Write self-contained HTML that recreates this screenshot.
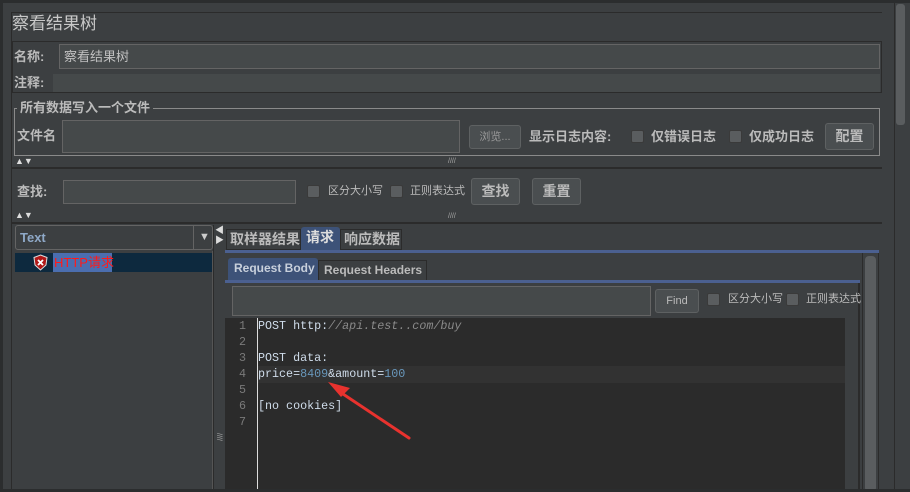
<!DOCTYPE html>
<html><head><meta charset="utf-8"><style>
*{margin:0;padding:0;box-sizing:border-box}
body{width:910px;height:492px;background:#3c3f41;position:relative;overflow:hidden;font-family:"Liberation Sans","Noto Sans CJK SC",sans-serif;color:#bbbbbb;font-size:13px}
.a{position:absolute}
.t{position:absolute;white-space:nowrap;line-height:1}
.inp{position:absolute;background:#45494a;border:1px solid #646464}
.btn{position:absolute;background:#4a4e50;border:1px solid #5e6162;border-radius:3px;color:#bbb;text-align:center;font-weight:bold}
.cb{position:absolute;width:13px;height:13px;background:#5a5d5f;border:1px solid #3a3a3a;border-radius:2px}
.sm{font-size:11px}
.code{position:absolute;font-family:"Liberation Mono",monospace;font-size:11.7px;color:#cfdcea;white-space:pre;line-height:16px}
.ln{position:absolute;font-family:"Liberation Mono",monospace;font-size:11.7px;color:#7a7a7a;line-height:16px;text-align:right;width:14px}
</style></head><body>
<div class="a" style="left:0;top:0;width:910px;height:3px;background:#2b2d2e"></div>
<div class="a" style="left:0;top:0;width:3px;height:492px;background:#2b2d2e"></div>
<div class="a" style="left:11px;top:12px;width:871px;height:1px;background:#2b2b2b"></div>
<div class="a" style="left:11px;top:12px;width:1px;height:480px;background:#2b2b2b"></div>
<div class="t" style="left:12px;top:15px;font-size:17px;color:#c8c8c8">察看结果树</div>
<div class="a" style="left:12px;top:41px;width:870px;height:52px;border:1px solid #2b2b2b"></div>
<div class="t" style="left:14px;top:50px;font-weight:bold">名称:</div>
<div class="inp" style="left:59px;top:44px;width:821px;height:25px"></div>
<div class="t" style="left:64px;top:50px;color:#c0c0c0">察看结果树</div>
<div class="t" style="left:14px;top:76px;font-weight:bold">注释:</div>
<div class="a" style="left:53px;top:74px;width:827px;height:18px;background:#45494a"></div>
<div class="a" style="left:14px;top:108px;width:866px;height:48px;border:1px solid #8a8a8a"></div>
<div class="t" style="left:17px;top:101px;background:#3c3f41;padding:0 3px;font-weight:bold">所有数据写入一个文件</div>
<div class="t" style="left:17px;top:129px;font-weight:bold">文件名</div>
<div class="inp" style="left:62px;top:120px;width:398px;height:33px"></div>
<div class="btn sm" style="left:469px;top:125px;width:52px;height:24px;line-height:22px;font-weight:normal;color:#999">浏览...</div>
<div class="t" style="left:529px;top:130px;font-weight:bold">显示日志内容:</div>
<div class="cb" style="left:631px;top:130px"></div>
<div class="t" style="left:651px;top:130px;font-weight:bold">仅错误日志</div>
<div class="cb" style="left:729px;top:130px"></div>
<div class="t" style="left:749px;top:130px;font-weight:bold">仅成功日志</div>
<div class="btn" style="left:825px;top:123px;width:49px;height:27px;line-height:25px;font-size:14px">配置</div>
<div class="t" style="left:15px;top:157px;font-size:9px;color:#ddd">▲▼</div>
<div class="t" style="left:448px;top:158px;font-size:7px;color:#aaa">////</div>
<div class="a" style="left:11px;top:167px;width:871px;height:2px;background:#2b2b2b"></div>
<div class="t" style="left:17px;top:185px;font-weight:bold">查找:</div>
<div class="inp" style="left:63px;top:180px;width:233px;height:24px"></div>
<div class="cb" style="left:307px;top:185px"></div>
<div class="t sm" style="left:328px;top:186px">区分大小写</div>
<div class="cb" style="left:390px;top:185px"></div>
<div class="t sm" style="left:410px;top:186px">正则表达式</div>
<div class="btn" style="left:471px;top:178px;width:49px;height:27px;line-height:25px;font-size:14px">查找</div>
<div class="btn" style="left:532px;top:178px;width:49px;height:27px;line-height:25px;font-size:14px">重置</div>
<div class="t" style="left:15px;top:211px;font-size:9px;color:#ddd">▲▼</div>
<div class="t" style="left:448px;top:213px;font-size:7px;color:#aaa">////</div>
<div class="a" style="left:11px;top:222px;width:871px;height:2px;background:#2b2b2b"></div>
<!-- combo -->
<div class="a" style="left:15px;top:225px;width:198px;height:25px;border:1px solid #646464;border-radius:3px;background:#3c3f41"></div>
<div class="a" style="left:193px;top:226px;width:1px;height:23px;background:#646464"></div>
<div class="t" style="left:20px;top:231px;font-weight:bold;color:#8fa9c8">Text</div>
<div class="t" style="left:199px;top:232px;font-size:11px;color:#ccc">▼</div>
<!-- tree -->
<div class="a" style="left:15px;top:251px;width:198px;height:238px;border-right:1px solid #555"></div>
<div class="a" style="left:15px;top:253px;width:197px;height:19px;background:#0d293e"></div>
<svg class="a" style="left:33px;top:254px" width="15" height="17" viewBox="0 0 15 17"><path d="M7.5 1 L14 3.5 L13 11 L7.5 16 L2 11 L1 3.5Z" fill="#b01818" stroke="#ddd" stroke-width="1"/><path d="M5 6 L10 11 M10 6 L5 11" stroke="#fff" stroke-width="1.8"/></svg>
<div class="a" style="left:53px;top:253px;width:59px;height:19px;background:#4b6eaf"></div>
<div class="t" style="left:54px;top:256px;color:#ff1a1a;font-size:13px">HTTP请求</div>
<div class="a" style="left:213px;top:225px;width:10px;height:265px;background:#3c3f41;border-left:1px solid #2b2b2b"></div>
<div class="t" style="left:215px;top:226px;font-size:9px;color:#ddd;line-height:1.1">◀<br>▶</div>
<div class="t" style="left:215px;top:433px;font-size:7px;color:#aaa;writing-mode:vertical-lr">////</div>
<!-- tabs -->
<div class="a" style="left:226px;top:229px;width:75px;height:21px;background:#3c3f41;border:1px solid #2b2b2b"></div>
<div class="t" style="left:230px;top:232px;font-weight:bold;font-size:14px">取样器结果</div>
<div class="a" style="left:301px;top:227px;width:39px;height:23px;background:#3d5278;border-radius:3px 3px 0 0"></div>
<div class="t" style="left:306px;top:230px;font-weight:bold;font-size:14px;color:#ddd">请求</div>
<div class="a" style="left:340px;top:229px;width:62px;height:21px;background:#3c3f41;border:1px solid #2b2b2b"></div>
<div class="t" style="left:344px;top:232px;font-weight:bold;font-size:14px">响应数据</div>
<div class="a" style="left:225px;top:250px;width:654px;height:3px;background:#4b6090"></div>
<div class="a" style="left:225px;top:253px;width:654px;height:239px;background:#3c3f41;border-right:1px solid #2b2b2b"></div>
<div class="a" style="left:865px;top:256px;width:11px;height:236px;background:#5a5d5f;border-radius:4px"></div>
<div class="a" style="left:862px;top:253px;width:1px;height:239px;background:#2b2b2b"></div>
<!-- inner tabs -->
<div class="a" style="left:228px;top:258px;width:90px;height:23px;background:#3d5278;border-radius:3px 3px 0 0"></div>
<div class="t" style="left:234px;top:262px;font-weight:bold;font-size:12px;color:#c8d0dc">Request Body</div>
<div class="a" style="left:318px;top:260px;width:109px;height:21px;border:1px solid #2b2b2b"></div>
<div class="t" style="left:324px;top:264px;font-weight:bold;font-size:12px">Request Headers</div>
<div class="a" style="left:225px;top:280px;width:635px;height:3px;background:#4b6090"></div>
<div class="a" style="left:858px;top:283px;width:2px;height:209px;background:#2b2b2b"></div>
<div class="inp" style="left:232px;top:286px;width:419px;height:30px"></div>
<div class="btn sm" style="left:655px;top:289px;width:44px;height:24px;line-height:22px;font-weight:normal">Find</div>
<div class="cb" style="left:707px;top:293px"></div>
<div class="t sm" style="left:728px;top:294px">区分大小写</div>
<div class="cb" style="left:786px;top:293px"></div>
<div class="t sm" style="left:806px;top:294px">正则表达式</div>
<!-- editor -->
<div class="a" style="left:225px;top:318px;width:633px;height:174px;background:#2b2b2b"></div>
<div class="a" style="left:845px;top:318px;width:13px;height:174px;background:#3c3f41"></div>
<div class="a" style="left:258px;top:366px;width:587px;height:17px;background:#323232"></div>
<div class="a" style="left:257px;top:318px;width:1px;height:174px;background:#ddd"></div>
<div class="ln" style="left:232px;top:318px">1<br>2<br>3<br>4<br>5<br>6<br>7</div>
<div class="code" style="left:258px;top:318px">POST http:<i style="color:#8a8a8a">//api.test..com/buy</i>

POST data:
price=<span style="color:#6897bb">8409</span>&amp;amount=<span style="color:#6897bb">100</span>

[no cookies]</div>
<svg class="a" style="left:0;top:0" width="910" height="492"><path d="M409 438 L340 392" stroke="#e8322e" stroke-width="3" stroke-linecap="round"/><path d="M328 382 L350 388 L341 397Z" fill="#e8322e"/></svg>
<!-- right scrollbar -->
<div class="a" style="left:894px;top:3px;width:16px;height:489px;background:#3c3f41;border-left:1px solid #2b2b2b"></div>
<div class="a" style="left:896px;top:4px;width:9px;height:121px;background:#5a5d5f;border-radius:3px"></div>
<div class="a" style="left:0;top:489px;width:910px;height:3px;background:#2b2d2e"></div>
</body></html>
